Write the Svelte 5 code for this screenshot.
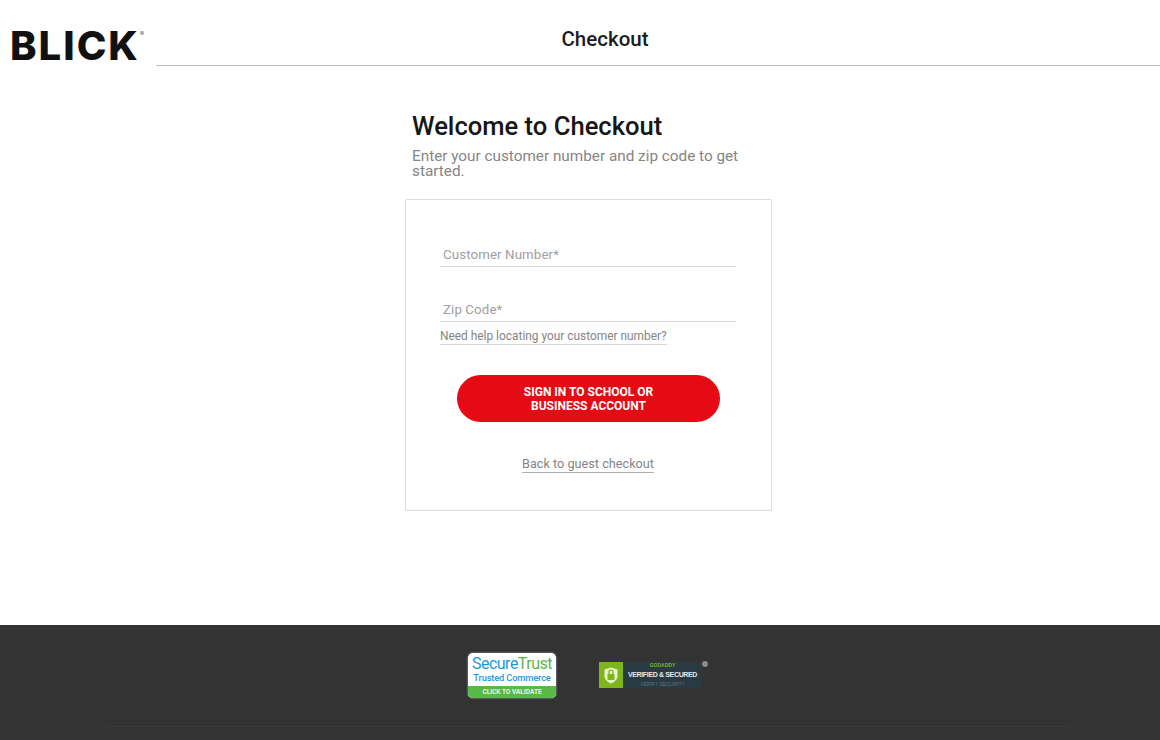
<script>
  const fields = ['Customer Number*', 'Zip Code*'];
</script>

<div class="page">
  <header class="header">
    <div class="logo">BLICK<span class="reg">®</span></div>
    <div class="title-bar"><h2>Checkout</h2></div>
  </header>

  <main class="main">
    <div class="intro">
      <h1>Welcome to Checkout</h1>
      <p>Enter your customer number and zip code to get started.</p>
    </div>
    <form class="card">
      {#each fields as f}
        <div class="field"><span>{f}</span></div>
      {/each}
      <span class="help">Need help locating your customer number?</span>
      <button type="button" class="cta">SIGN IN TO SCHOOL OR<br />BUSINESS ACCOUNT</button>
      <span class="back">Back to guest checkout</span>
    </form>
  </main>

  <footer class="footer">
    <div class="badges">
      <div class="st">
        <div class="st-top"><span class="st-a">Secure</span><span class="st-b">Trust</span></div>
        <div class="st-mid">Trusted Commerce</div>
        <div class="st-bot">CLICK TO VALIDATE</div>
      </div>
      <div class="gd">
        <div class="gd-icon">
          <svg width="14" height="17" viewBox="0 0 14 17" aria-hidden="true">
            <path d="M7 .5 13.5 2.5V9c0 3.5-3 6-6.500 7.500C3.500 15 .5 12.500.5 9V2.500Z" fill="#e8f3c8" />
            <rect x="3.500" y="7" width="7" height="6" rx=".8" fill="#7db51c" />
            <path d="M5 7V5.200a2 2 0 0 1 4 0V7" fill="none" stroke="#7db51c" stroke-width="1.300" />
          </svg>
        </div>
        <div class="gd-text">
          <span class="gd-1">GODADDY</span>
          <span class="gd-2">VERIFIED &amp; SECURED</span>
          <span class="gd-3">VERIFY SECURITY</span>
        </div>
        <span class="gd-dot"></span>
      </div>
    </div>
    <div class="rule"></div>
  </footer>
</div>

<style>
  :global(body) {
    margin: 0;
    background: #fff;
    font-family: Roboto, "Liberation Sans", sans-serif;
  }
  .page {
    height: 740px;
    overflow: hidden;
    display: flex;
    flex-direction: column;
  }
  .header {
    display: flex;
    height: 66px;
    flex: none;
  }
  .logo {
    padding: 23px 0 0 10px;
    font-family: Inter, sans-serif;
    font-weight: 800;
    font-size: 40px;
    line-height: 46px;
    letter-spacing: 2px;
    color: #111;
    flex: none;
    width: 146px;
    box-sizing: border-box;
    position: relative;
  }
  .reg {
    position: absolute;
    left: 140px;
    top: 31px;
    font-size: 6px;
    line-height: 6px;
    font-weight: 400;
    letter-spacing: 0;
    color: #666;
  }
  .title-bar {
    flex: 1;
    margin-left: 10px;
    border-bottom: 1px solid #bdbdbd;
    padding-right: 106px;
    display: flex;
    justify-content: center;
  }
  h2 {
    margin: 27px 0 0;
    font-size: 20.500px;
    line-height: 24px;
    font-weight: 500;
    color: #1c1c1c;
  }
  .main {
    flex: 1;
    width: 367px;
    margin-left: 405px;
  }
  .intro {
    padding: 45px 28px 0 7px;
  }
  h1 {
    margin: 0;
    font-size: 25.600px;
    line-height: 30px;
    font-weight: 500;
    color: #161616;
  }
  .intro p {
    margin: 8px 0 0;
    font-size: 15.300px;
    line-height: 15px;
    color: #858585;
  }
  .card {
    margin-top: 20px;
    height: 312px;
    box-sizing: border-box;
    border: 1px solid #dcdcdc;
    border-radius: 2px;
    padding: 0 35px 0 34px;
    display: flex;
    flex-direction: column;
  }
  .field {
    height: 21px;
    border-bottom: 1px solid #d9d9d9;
    margin-top: 29px;
    padding: 4px 0 0 3px;
    font-size: 13.300px;
    line-height: 20px;
    color: #a0a0a0;
    letter-spacing: 0.1px;
  }
  .field:first-child {
    margin-top: 41px;
  }
  .help {
    align-self: flex-start;
    margin-top: 7px;
    font-size: 11.900px;
    line-height: 15px;
    color: #858585;
    border-bottom: 1px solid #d9d9d9;
  }
  .cta {
    margin: 30px 16px 0 17px;
    height: 47px;
    border: 0;
    border-radius: 24px;
    background: #e60a14;
    color: #fff;
    font-family: inherit;
    font-weight: 700;
    font-size: 12px;
    line-height: 14px;
    padding: 0;
  }
  .back {
    align-self: center;
    margin-top: 33px;
    font-size: 12.700px;
    line-height: 17px;
    color: #858585;
    border-bottom: 1px solid #adadad;
  }
  .footer {
    height: 115px;
    flex: none;
    background: #333;
    position: relative;
  }
  .badges {
    display: flex;
    align-items: flex-start;
    padding: 28px 0 0 468px;
  }
  .st {
    width: 88px;
    height: 45px;
    box-sizing: border-box;
    background: #fff;
    border-radius: 5px;
    overflow: hidden;
    display: flex;
    flex-direction: column;
    align-items: center;
    font-family: Roboto, sans-serif;
    box-shadow: 0 0 2px #ccc;
  }
  .st-top {
    font-size: 16px;
    line-height: 16px;
    height: 16px;
    letter-spacing: -0.5px;
    margin-top: 3px;
    margin-bottom: 1px;
    display: flex;
  }
  .st-a { color: #1b9ad6; }
  .st-b { color: #5fb446; }
  .st-mid {
    font-size: 9.300px;
    line-height: 10px;
    letter-spacing: -0.15px;
    font-weight: 500;
    color: #1b9ad6;
    white-space: nowrap;
  }
  .st-bot {
    margin-top: auto;
    width: 100%;
    height: 12px;
    background: #58b947;
    color: #eaf7e4;
    font-size: 6.500px;
    line-height: 12px;
    font-weight: 700;
    text-align: center;
    white-space: nowrap;
  }
  .gd {
    margin: 9px 0 0 43px;
    width: 103px;
    height: 26px;
    display: flex;
    background: #2a3a42;
    position: relative;
  }
  .gd-icon {
    width: 24px;
    background: #7db51c;
    display: flex;
    align-items: center;
    justify-content: center;
    flex: none;
  }
  .gd-text {
    flex: 1;
    min-width: 0;
    display: flex;
    flex-direction: column;
    align-items: center;
    font-family: "Liberation Sans", sans-serif;
    white-space: nowrap;
  }
  .gd-1 {
    font-size: 5px;
    line-height: 6px;
    color: #7db51c;
    font-weight: 700;
  }
  .gd-2 {
    font-size: 7px;
    line-height: 13px;
    letter-spacing: -0.35px;
    color: #e4e8ea;
    font-weight: 700;
  }
  .gd-3 {
    font-size: 5px;
    line-height: 6px;
    color: #5d7481;
  }
  .gd-dot {
    position: absolute;
    right: -6px;
    top: -1px;
    width: 6px;
    height: 6px;
    border-radius: 50%;
    background: #8a8a8a;
  }
  .rule {
    position: absolute;
    left: 108px;
    right: 92px;
    top: 101px;
    height: 1px;
    background: #3b3b3b;
  }
</style>
